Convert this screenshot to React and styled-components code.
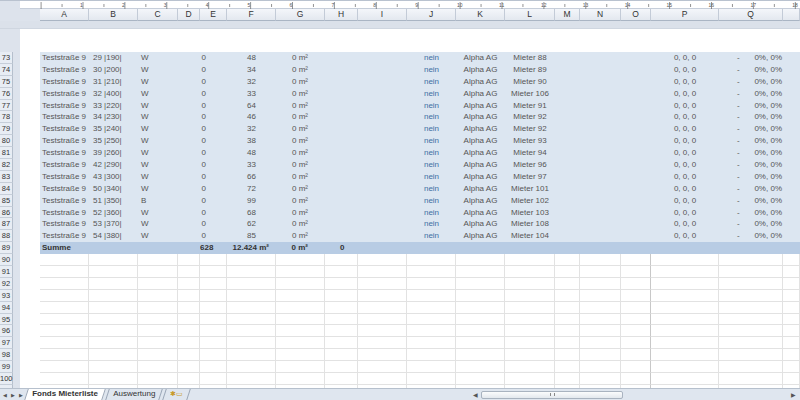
import React from "react";
import styled, { createGlobalStyle } from "styled-components";

const Global = createGlobalStyle`
  html, body { margin: 0; padding: 0; background: #fff; }
  body { font-family: "Liberation Sans", Arial, sans-serif; }
`;

const COLS = [
  ["A", 49], ["B", 49], ["C", 40], ["D", 22], ["E", 27], ["F", 49], ["G", 49], ["H", 33],
  ["I", 49], ["J", 49], ["K", 49], ["L", 50], ["M", 25], ["N", 41], ["O", 30], ["P", 68], ["Q", 64], ["", 17],
];
const RH = 11.9;

const Shell = styled.div`
  width: 800px; height: 400px; overflow: hidden; display: flex; flex-direction: column;
  background: #dde3ec; font-size: 8px; color: #555;
`;
const RulerWrap = styled.div`
  height: 9px; display: flex; flex: none; border-top: 1px solid #b9c2cf; box-sizing: border-box;
`;
const RulerLeft = styled.div` width: 20px; background: #dde3ec; `;
const RulerBody = styled.div` flex: 1; background: #fff; border-bottom: 1px solid #c6ceda; `;
const HeaderRow = styled.div` height: 12px; display: flex; flex: none; `;
const HeaderCorner = styled.div` width: 40px; background: #dde3ec; `;
const ColHead = styled.div`
  flex: none; box-sizing: border-box; width: ${(p) => p.$w}px; height: 12px; line-height: 11px; text-align: center;
  font-size: 8.5px; color: #333; background: linear-gradient(#f4f6fa, #e3e8ef);
  border-right: 1px solid #c3cbd7; border-bottom: 1px solid #aab5c4;
`;
const Band = styled.div` height: 7px; flex: none; background: #dbe1ea; border-bottom: 1px solid #cfd6e0; `;
const Body = styled.div` flex: 1; display: flex; overflow: hidden; `;
const Gutter = styled.div` width: 20px; flex: none; padding-top: 23px; `;
const RowHead = styled.div`
  width: 13px; height: ${RH}px; box-sizing: border-box; text-align: center; line-height: ${RH}px;
  font-size: 7.5px; color: #333; background: #e8edf4; border-bottom: 1px solid #c6ced9; border-right: 1px solid #b5bfcc;
`;
const Page = styled.div` flex: 1; background: #fff; padding: 23px 0 0 20px; `;
const Row = styled.div`
  display: flex; height: ${RH}px; line-height: ${RH}px;
  background: ${(p) => (p.$sum ? "#b8cce4" : p.$data ? "#dce6f1" : "#fff")};
  font-weight: ${(p) => (p.$sum ? "bold" : "normal")};
  color: ${(p) => (p.$sum ? "#333" : "#555")};
`;
const Cell = styled.div`
  flex: none; box-sizing: border-box; white-space: nowrap; overflow: hidden;
  width: ${(p) => p.$w}px;
  text-align: ${(p) => p.$a || "left"};
  padding-left: ${(p) => p.$pl || 0}px; padding-right: ${(p) => p.$pr || 0}px;
  color: ${(p) => p.$c || "inherit"};
  ${(p) => p.$grid && `border-right: 1px solid ${p.$brk ? "#c8c8c8" : "#e2e2e2"}; border-bottom: 1px solid #e2e2e2;`}
  display: ${(p) => (p.$split ? "flex" : "block")};
  justify-content: space-between;
`;
const TabBar = styled.div`
  height: 11px; flex: none; display: flex; align-items: stretch; background: #dfe6ef;
  border-top: 1px solid #b6c0cd; font-size: 8px; color: #333;
`;
const Nav = styled.div`
  width: 26px; flex: none; display: flex; align-items: center; justify-content: space-around;
  font-size: 5px; color: #555; padding: 0 1px; box-sizing: border-box;
`;
const Tab = styled.div`
  padding: 0 5px; line-height: 10px; margin-right: 3px;
  background: ${(p) => (p.$active ? "#fff" : "transparent")};
  font-weight: ${(p) => (p.$active ? 600 : "normal")};
  border-left: 1px solid #9aa6b6; border-right: 1px solid #9aa6b6;
  transform: skewX(-18deg);
  & > span { display: inline-block; transform: skewX(18deg); }
`;
const NewTabIcon = styled.span` color: #c89a2a; font-size: 7px; `;
const Spacer = styled.div` flex: 1; `;
const Scroll = styled.div` width: 323px; display: flex; align-items: center; gap: 3px; padding-right: 4px; `;
const Arrow = styled.span` font-size: 6px; color: #555; `;
const Thumb = styled.div`
  width: 142px; height: 8px; border: 1px solid #a9b3c0; border-radius: 2px; box-sizing: border-box;
  background: linear-gradient(#fbfcfd, #e3e8ee); display: flex; align-items: center; justify-content: center;
  &::after { content: ""; width: 3px; height: 3px; border-left: 1px solid #888; border-right: 1px solid #888; }
`;
const RulerSvg = styled.svg` display: block; `;

const data = [
  [73, "29 |190|", "W", 48, "Mieter 88"], [74, "30 |200|", "W", 34, "Mieter 89"], [75, "31 |210|", "W", 32, "Mieter 90"],
  [76, "32 |400|", "W", 33, "Mieter 106"], [77, "33 |220|", "W", 64, "Mieter 91"], [78, "34 |230|", "W", 46, "Mieter 92"],
  [79, "35 |240|", "W", 32, "Mieter 92"], [80, "35 |250|", "W", 38, "Mieter 93"], [81, "39 |260|", "W", 48, "Mieter 94"],
  [82, "42 |290|", "W", 33, "Mieter 96"], [83, "43 |300|", "W", 66, "Mieter 97"], [84, "50 |340|", "W", 72, "Mieter 101"],
  [85, "51 |350|", "B", 99, "Mieter 102"], [86, "52 |360|", "W", 68, "Mieter 103"], [87, "53 |370|", "W", 62, "Mieter 108"],
  [88, "54 |380|", "W", 85, "Mieter 104"],
];
const w = (i) => COLS[i][1];

function Ruler() {
  const nums = Array.from({ length: 18 }, (_, i) => i + 1);
  return (
    <RulerSvg width="780" height="8">
      {Array.from({ length: 38 }, (_, i) => {
        const x = 63 - 41.9 + i * 20.95;
        const major = i % 2 === 0;
        return <line key={i} x1={x} x2={x} y1={major ? 1 : 3} y2={major ? 8 : 6} stroke="#666" strokeWidth="0.7" />;
      })}
      {nums.map((n) => (
        <text key={n} x={63 + (n - 1) * 41.9 - 3} y="6" fontSize="5" fill="#555" fontFamily="Liberation Sans">{n}</text>
      ))}
    </RulerSvg>
  );
}

export default function App() {
  const empty = Array.from({ length: 12 }, (_, i) => 90 + i);
  return (
    <Shell>
      <Global />
      <RulerWrap><RulerLeft /><RulerBody><Ruler /></RulerBody></RulerWrap>
      <HeaderRow>
        <HeaderCorner />
        {COLS.map(([l, cw], i) => <ColHead key={i} $w={cw}>{l}</ColHead>)}
      </HeaderRow>
      <Band />
      <Body>
        <Gutter>
          {data.map((d) => <RowHead key={d[0]}>{d[0]}</RowHead>)}
          <RowHead>89</RowHead>
          {empty.map((n) => <RowHead key={n}>{n}</RowHead>)}
        </Gutter>
        <Page>
          {data.map(([n, b, c, f, l]) => (
            <Row key={n} $data>
              <Cell $w={w(0)} $pl={2}>Teststraße 9</Cell>
              <Cell $w={w(1)} $pl={4}>{b}</Cell>
              <Cell $w={w(2)} $pl={3}>{c}</Cell>
              <Cell $w={w(3)} />
              <Cell $w={w(4)} $a="right" $pr={21}>0</Cell>
              <Cell $w={w(5)} $a="right" $pr={20}>{f}</Cell>
              <Cell $w={w(6)} $a="right" $pr={17}>0 m²</Cell>
              <Cell $w={w(7)} />
              <Cell $w={w(8)} />
              <Cell $w={w(9)} $a="center" $c="#3d6fa3">nein</Cell>
              <Cell $w={w(10)} $a="center">Alpha AG</Cell>
              <Cell $w={w(11)} $a="center">{l}</Cell>
              <Cell $w={w(12)} />
              <Cell $w={w(13)} />
              <Cell $w={w(14)} />
              <Cell $w={w(15)} $a="center">0, 0, 0</Cell>
              <Cell $w={w(16)} $split $pl={18} $pr={1}><span>-</span><span>0%, 0%</span></Cell>
              <Cell $w={w(17)} />
            </Row>
          ))}
          <Row $sum>
            <Cell $w={w(0) + w(1) + w(2) + w(3)} $pl={2}>Summe</Cell>
            <Cell $w={w(4)} $a="right" $pr={14}>628</Cell>
            <Cell $w={w(5)} $a="right" $pr={7}>12.424 m²</Cell>
            <Cell $w={w(6)} $a="right" $pr={17}>0 m²</Cell>
            <Cell $w={w(7)} $pl={15}>0</Cell>
          </Row>
          {empty.map((n) => (
            <Row key={n}>
              {COLS.map(([, cw], i) => <Cell key={i} $w={cw} $grid $brk={i === 14} />)}
            </Row>
          ))}
        </Page>
      </Body>
      <TabBar>
        <Nav><span>◀</span><span>▶</span><span>▶</span></Nav>
        <Tab $active><span>Fonds Mieterliste</span></Tab>
        <Tab><span>Auswertung</span></Tab>
        <Tab><NewTabIcon>✱▭</NewTabIcon></Tab>
        <Spacer />
        <Scroll>
          <Arrow>◀</Arrow>
          <Thumb />
          <Spacer />
          <Arrow>▶</Arrow>
        </Scroll>
      </TabBar>
    </Shell>
  );
}
